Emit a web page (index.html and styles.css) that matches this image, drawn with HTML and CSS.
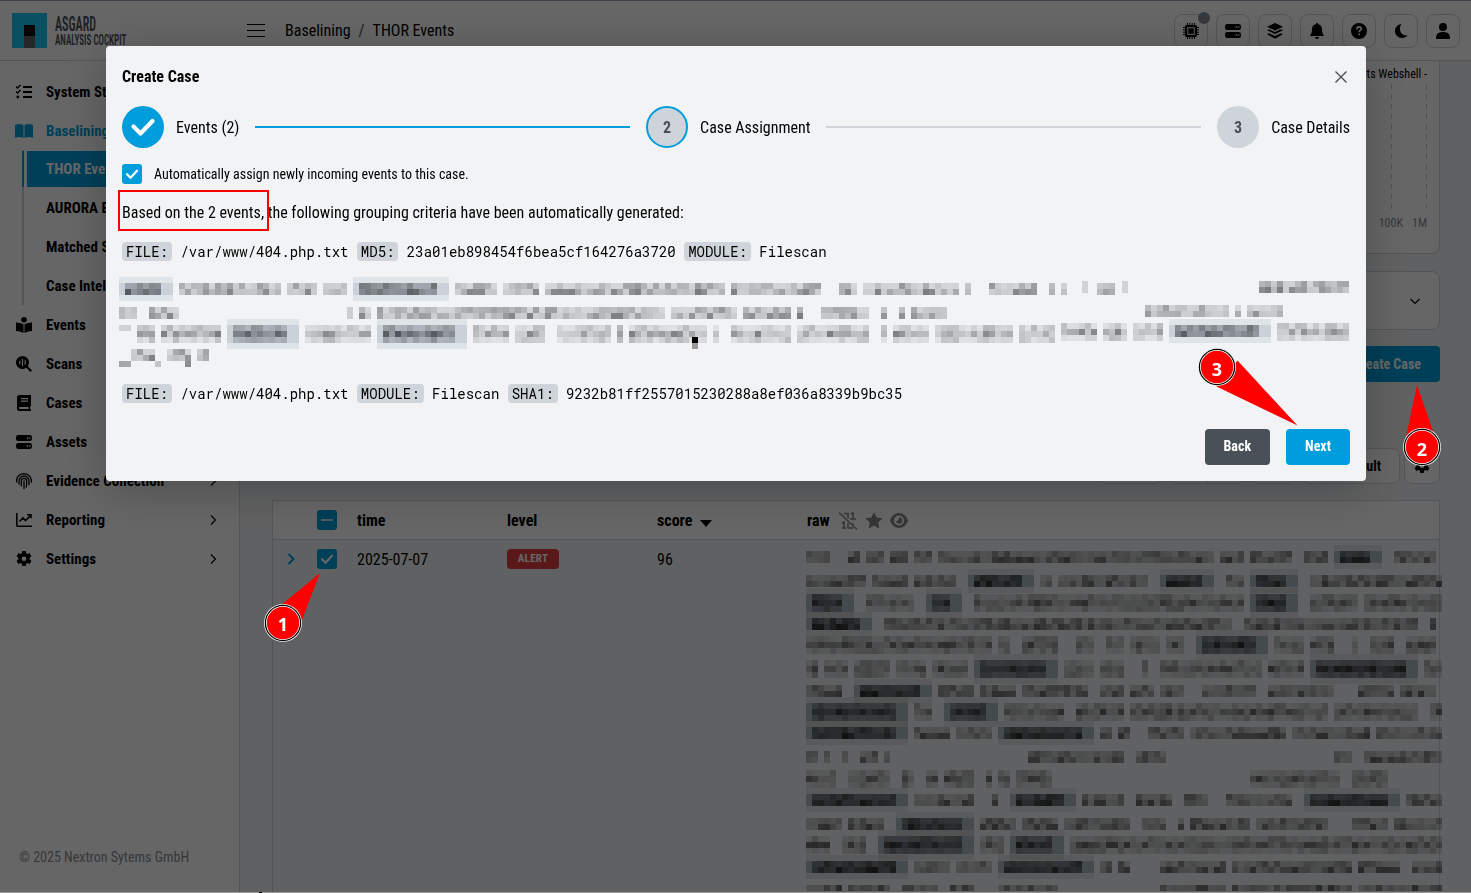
FILE: index.html
```html
<!DOCTYPE html>
<html lang="en">
<head>
<meta charset="utf-8">
<title>ASGARD Analysis Cockpit</title>
<link rel="stylesheet" href="styles.css">
</head>
<body>
<svg class="defs" width="0" height="0">
  <symbol id="server" viewBox="0 0 16 16"><path fill-rule="evenodd" d="M2.2 1h11.6A2.2 2.2 0 0 1 16 3.200v1.600A2.200 2.200 0 0 1 13.800 7H2.200A2.200 2.200 0 0 1 0 4.800V3.200A2.200 2.200 0 0 1 2.200 1zM10.700 3.200v1.600h1.600V3.200zM13.300 3.200v1.600h1.200V3.200zM2.200 9h11.600A2.200 2.200 0 0 1 16 11.200v1.600a2.200 2.200 0 0 1-2.200 2.200H2.200A2.200 2.200 0 0 1 0 12.800v-1.600A2.200 2.200 0 0 1 2.200 9zM10.700 11.200v1.600h1.600v-1.600zM13.300 11.200v1.600h1.200v-1.600z"/></symbol>
  <symbol id="gear" viewBox="0 0 16 16"><path fill-rule="evenodd" d="M6.300 0h3.400l.5 2.300 1.200.7 2.300-.8 1.700 3-1.800 1.600v1.500l1.800 1.600-1.700 3-2.300-.8-1.200.7-.5 2.200H6.300l-.5-2.200-1.200-.7-2.300.8-1.700-3 1.800-1.600V6.800L.6 5.200l1.700-3 2.300.8 1.200-.7zM8 5.400a2.300 2.300 0 1 0 0 4.700 2.300 2.300 0 0 0 0-4.700z"/></symbol>
  <symbol id="check" viewBox="0 0 20 20"><path d="M5 10.200l3.500 3.500 6.500-7" fill="none" stroke="currentColor" stroke-width="2.300" stroke-linecap="round" stroke-linejoin="round"/></symbol>
  <symbol id="chev" viewBox="0 0 16 16"><path d="M6 3.500l4.500 4.500L6 12.500" fill="none" stroke="currentColor" stroke-width="1.200"/></symbol>
</svg>

<header class="topbar">
  <div class="brand">
    <svg class="logo" width="35" height="35" viewBox="0 0 35 35"><path fill="#14c8f5" d="M0 0h35v35H0z"/><path fill="#111" d="M12 12h11v11H12z"/><path fill="#5c6264" d="M12 23h11v12H12z"/></svg>
    <div class="wordmark"><span class="wm1">ASGARD</span><span class="wm2">ANALYSIS COCKPIT</span></div>
  </div>
  <svg class="burger" width="18" height="14" viewBox="0 0 18 14"><path d="M0 .5h18M0 6.500h18M0 12.500h18" stroke="#000"/></svg>
  <nav class="crumbs"><span>Baselining</span><span class="slash">/</span><span>THOR Events</span></nav>
  <div class="tools">
    <span class="tool"><svg viewBox="0 0 16 16"><path fill-rule="evenodd" d="M3 2h10l1 1v10l-1 1H3l-1-1V3zM4.300 4.300v7.400h7.400V4.300zM5.300 5.300h5.400v5.400H5.300z"/><path d="M4.500 0v16M6.800 0v16M9.200 0v16M11.500 0v16M0 4.500h16M0 6.800h16M0 9.200h16M0 11.500h16" stroke="#000" stroke-dasharray="2.300 11.400"/></svg><i class="dot"></i></span>
    <span class="tool"><svg><use href="#server"/></svg></span>
    <span class="tool"><svg viewBox="0 0 16 16"><path d="M8 0l8 3.700-8 3.700-8-3.700zM0 7.200l2-.9 6 2.800 6-2.800 2 .9-8 3.700zM0 11.200l2-.9 6 2.800 6-2.800 2 .9L8 15.800z"/></svg></span>
    <span class="tool"><svg viewBox="0 0 16 16"><path d="M8 0c.7 0 1 .5 1 1.100 2.400.5 4 2.400 4 4.900 0 3.500.8 5.500 2.200 7H.8C2.200 11.500 3 9.500 3 6c0-2.500 1.600-4.400 4-4.900C7 .5 7.300 0 8 0zM6 14h4a2 2 0 0 1-4 0z"/></svg></span>
    <span class="tool"><svg viewBox="0 0 16 16"><circle cx="8" cy="8" r="8"/><path d="M5.800 6.200c0-1.600 1-2.300 2.200-2.300s2.200.8 2.200 2c0 1.500-1.900 1.600-2 3.200M8.100 10.600v1.700" fill="none" stroke="#fff" stroke-width="1.600"/></svg></span>
    <span class="tool"><svg viewBox="0 0 16 16"><path d="M8.500 1C4.800 1.300 2 4.200 2 8c0 4 3.200 7 7 7 2.300 0 4.300-1 5.500-2.700C10.500 13 7 10.300 7 6.300 7 4.200 7.300 2.300 8.500 1z"/></svg></span>
    <span class="tool"><svg viewBox="0 0 16 16"><circle cx="8" cy="4" r="4"/><path d="M1 15c0-4 2.500-6 7-6s7 2 7 6c0 .7-.3 1-1 1H2c-.7 0-1-.3-1-1z"/></svg></span>
  </div>
</header>

<div class="shell">
  <aside class="side">
    <div class="item"><svg viewBox="0 0 16 16"><path d="M7 3h9M7 8h9M7 13h9" stroke="#000" stroke-width="1.900"/><path d="M0 2.500l1.500 1.500L4.500 1M0 7.500L1.500 9l3-3" fill="none" stroke="#000" stroke-width="1.400"/><circle cx="1.800" cy="13" r="1.400"/></svg>System Status</div>
    <div class="item blue"><svg class="wide" viewBox="0 0 18 16"><path d="M0 2c3-1.300 6-1.200 8.500.2V15C6 13.700 3 13.700 0 14.800zM9.500 2.200C12 .8 15 .7 18 2v12.800c-3-1.100-6-1.100-8.500.2z"/></svg>Baselining</div>
    <div class="sub">
      <div class="subitem on">THOR Events</div>
      <div class="subitem">AURORA Events</div>
      <div class="subitem">Matched Signatures</div>
      <div class="subitem">Case Intelligence</div>
    </div>
    <div class="item"><svg viewBox="0 0 16 16"><circle cx="8" cy="2.800" r="2.800"/><path d="M0 5.500c3 .1 5.500.7 7.500 2V16C5.500 14.700 3 14.200 0 14zM16 5.500c-3 .1-5.500.7-7.500 2V16c2-1.300 4.500-1.800 7.500-2z"/></svg>Events</div>
    <div class="item"><svg viewBox="0 0 16 16"><path fill-rule="evenodd" d="M6.500 0a6.500 6.500 0 0 1 5.300 10.200L16 14.500 14.500 16l-4.300-4.200A6.500 6.500 0 1 1 6.500 0zM3.200 4.700v3.600h1.200V4.700zM5.900 3v7h1.200V3zM8.600 4.200v4.600h1.200V4.200z"/></svg>Scans</div>
    <div class="item"><svg viewBox="0 0 16 16"><path fill-rule="evenodd" d="M3.500 0H15v11.500h-1V14h1v2H3.500A2.500 2.500 0 0 1 1 13.500v-11A2.500 2.500 0 0 1 3.500 0zM5 3v1.200h7V3zM5 5.600v1.200h7V5.600zM4 12c-1.500 0-1.500 2 0 2h8.500v-2z"/></svg>Cases</div>
    <div class="item"><svg><use href="#server"/></svg>Assets</div>
    <div class="item"><svg viewBox="0 0 16 16"><path d="M.6 9.500V7.500C.6 3.500 4 .7 8 .7s7.400 3 7.400 7v2M3 11.500V8a5 5 0 0 1 10 0v4M5.300 13.500V8a2.700 2.700 0 0 1 5.400 0c0 2.500 0 4-.5 6.500M8 7.500V16" fill="none" stroke="#000" stroke-width="1.300"/></svg>Evidence Collection<svg class="more"><use href="#chev"/></svg></div>
    <div class="item"><svg viewBox="0 0 16 16"><path d="M.8 1v12.200c0 .6.400 1 1 1H16M3.500 9.500L7 6l2.500 2.500L15 3M11 2.800h4v3.500" fill="none" stroke="#000" stroke-width="1.600"/></svg>Reporting<svg class="more"><use href="#chev"/></svg></div>
    <div class="item"><svg><use href="#gear"/></svg>Settings<svg class="more"><use href="#chev"/></svg></div>
    <div class="copy">© 2025 Nextron Sytems GmbH</div>
  </aside>

  <main class="main">
    <section class="chart">
      <div class="plot">
        <svg class="grid" width="37" height="146" viewBox="0 0 37 146"><path d="M1.500 0v146" stroke="#c4c9ce" stroke-dasharray="5 5"/><path d="M36.500 0v146" stroke="#c4c9ce" stroke-dasharray="5 5"/></svg>
        <div class="legend">Detects Webshell -</div>
      </div>
      <div class="axis"><span>100K</span><span>1M</span></div>
    </section>
    <section class="filter"><svg viewBox="0 0 16 16" class="down"><use href="#chev"/></svg></section>
    <div class="actions"><span class="btn primary">Create Case</span></div>
    <div class="toolbar"><span class="tb w1"></span><span class="tb w2"></span><span class="tb w3"></span><span class="tb w4">Default</span><span class="tb w5"><svg width="16" height="16"><use href="#gear"/></svg></span></div>
    <section class="table">
      <div class="row head">
        <span></span><span class="box"><svg viewBox="0 0 20 20"><path d="M4 10h12" stroke="#fff" stroke-width="1.500"/></svg></span>
        <span>time</span><span>level</span><span>score <i class="caret"></i></span>
        <span class="raw">raw
          <svg width="20" height="18" viewBox="0 0 20 18"><path d="M1 .5l18 17" stroke="#82878c" stroke-width="1.500"/><path d="M6 1.500h4v5M13 2l2-1v6M4 11l2-1v6M4 16h4M10 11v5h5M15 11v2M12 7h6" fill="none" stroke="#82878c" stroke-width="1.500"/></svg>
          <svg width="18" height="17" viewBox="0 0 18 17"><path fill="#82878c" d="M9 0l2.600 5.500 6 .8-4.400 4.100 1.100 6L9 13.500l-5.300 2.900 1.100-6L.4 6.300l6-.8z"/></svg>
          <svg width="18" height="15" viewBox="0 0 18 15"><path fill="#82878c" fill-rule="evenodd" d="M9 0c4 0 7.300 2.800 9 7.500-1.700 4.700-5 7.500-9 7.500S1.700 12.200 0 7.500C1.700 2.800 5 0 9 0zm0 2.500a5 5 0 1 0 0 10 5 5 0 0 0 0-10z"/><path fill="#82878c" d="M9 4.300a3.200 3.200 0 1 1-3.100 3.700c2 .4 3.300-1.200 3.100-3.700z"/></svg>
        </span>
      </div>
      <div class="row">
        <span class="exp"><svg viewBox="0 0 16 16"><path d="M5.500 3l5 5-5 5" fill="none" stroke="#009ddc" stroke-width="2"/></svg></span><span class="box"><svg><use href="#check"/></svg></span>
        <span>2025-07-07</span><span><b class="alert">ALERT</b></span><span>96</span>
        <span class="rawcell"><canvas id="rawMosaic" width="638" height="348"></canvas></span>
      </div>
    </section>
  </main>
</div>

<div class="backdrop"></div>
<div class="edge"><i></i></div>

<div class="modal">
  <div class="mhead"><span>Create Case</span><svg width="12" height="12" viewBox="0 0 12 12"><path d="M.5.5l11 11M11.500.5l-11 11" stroke="#495057" stroke-width="1.400"/></svg></div>
  <div class="steps">
    <span class="circle done"><svg viewBox="0 0 42 42"><path d="M11.500 20.500l7 7L30.500 15" fill="none" stroke="#fff" stroke-width="4.200" stroke-linecap="round" stroke-linejoin="round"/></svg></span><span class="label">Events (2)</span><i class="line active"></i>
    <span class="circle current">2</span><span class="label">Case Assignment</span><i class="line"></i>
    <span class="circle">3</span><span class="label">Case Details</span>
  </div>
  <div class="auto"><span class="box"><svg><use href="#check"/></svg></span>Automatically assign newly incoming events to this case.</div>
  <p class="based">Based on the 2 events, the following grouping criteria have been automatically generated:</p>
  <div class="crit"><code>FILE:</code> /var/www/404.php.txt <code>MD5:</code> 23a01eb898454f6bea5cf164276a3720 <code>MODULE:</code> Filescan</div>
  <canvas class="hidden-crit" id="critMosaic" width="1236" height="92"></canvas>
  <div class="crit"><code>FILE:</code> /var/www/404.php.txt <code>MODULE:</code> Filescan <code>SHA1:</code> 9232b81ff2557015230288a8ef036a8339b9bc35</div>
  <div class="mfoot"><span class="btn dark">Back</span><span class="btn primary">Next</span></div>
</div>

<svg class="marks" width="1471" height="893" viewBox="0 0 1471 893">
  <rect x="119" y="191" width="149" height="39" fill="none" stroke="#f00" stroke-width="2"/>
  <path fill="#f00" d="M320 573L280 606l22 14zM1417 385l-11 52 29 0zM1297.500 425.500l-60-65-21 26z"/>
  <g>
    <g class="pin" transform="translate(283 623)"><circle r="19" class="p0"/><circle r="18.200" class="p1"/><circle r="17" class="p2"/><circle r="16.200" class="p3"/><text y="8">1</text></g>
    <g class="pin" transform="translate(1422 447)"><circle r="19" class="p0"/><circle r="18.200" class="p1"/><circle r="17" class="p2"/><circle r="16.200" class="p3"/><text y="8.500">2</text></g>
    <g class="pin" transform="translate(1217 367)"><circle r="19" class="p0"/><circle r="18.200" class="p1"/><circle r="17" class="p2"/><circle r="16.200" class="p3"/><text y="8.500">3</text></g>
  </g>
</svg>
<script src="mosaic.js"></script>
</body>
</html>
```

FILE: styles.css
```css
*{box-sizing:border-box}
body{margin:0;width:1471px;height:893px;overflow:hidden;background:#f1f3f5;font:16px/24px "Roboto Condensed",Roboto,sans-serif;font-stretch:75%;color:#000;position:relative}
.defs{position:absolute}
svg{display:block;flex:none}
.topbar{height:61px;background:#fff;border-bottom:1px solid #ced4da;display:flex;align-items:center;padding:0 11px 0 12px;border-top:1px solid #9e9eb8}
.brand{width:235px;display:flex;gap:8px;align-items:center}
.wordmark{display:flex;flex-direction:column;color:#495057;font-weight:600;padding-top:1px}
.wm1{font-size:20px;line-height:18px;width:41px;transform:scaleX(.6);transform-origin:0 0;white-space:nowrap}
.wm2{font-size:14px;line-height:15px;transform:scaleX(.645);transform-origin:0 0;white-space:nowrap;width:71px}
.crumbs{margin-left:20px;display:flex;gap:8px}
.slash{color:#495057}
.tools{margin-left:auto;display:flex;gap:8px}
.tool{width:34px;height:34px;border:1px solid #ced4da;border-radius:8px;display:grid;place-items:center;position:relative}
.tool svg{width:16px;height:16px}
.dot{position:absolute;right:-3px;top:-3px;width:12px;height:12px;border-radius:50%;background:#868e96}
.shell{display:flex;height:832px}
.side{width:240px;background:#fff;border-right:1px solid #ced4da;display:flex;flex-direction:column;padding-top:11px}
.item{height:39px;display:flex;align-items:center;padding:0 18px 0 16px;font-weight:700;font-size:15px}
.item svg{width:16px;height:16px;margin-right:14px}
.item svg.wide{width:18px;margin:0 13px 0 -1px}
.item svg.more{margin:0 0 0 auto}
.blue{color:#009ddc;fill:#009ddc}
.sub{margin:0 0 0 22px;height:155px;border-left:2px solid #ced4da;font-weight:700;font-size:15px;padding-top:1px}
.subitem{height:39px;padding-left:19px;margin-left:3px;line-height:38px;white-space:nowrap}
.subitem.on{height:36px;line-height:36px;background:#009ddc;color:#fff;margin-bottom:2px;box-shadow:-3px 0 #fff,-5px 0 #009ddc}
.copy{margin:auto 0 24px 19px;font-size:14px;color:#868e96}
.main{flex:1;padding:0 31px 0 32px;overflow:hidden}
.chart{height:193px;background:#fff;border:1px solid #ced4da;border-top:0;border-radius:0 0 8px 8px;padding:3px 12px 0;display:flex;flex-direction:column;align-items:flex-end}
.plot{display:grid;justify-items:end}
.plot>*{grid-area:1/1}
.legend{font-size:12px;line-height:20px;height:20px;background:#fff}
.axis{display:flex;gap:9px;font-size:12px;line-height:27px;color:#868e96}
.filter{height:59px;margin-top:17px;background:#fff;border:1px solid #ced4da;border-radius:8px;display:flex;align-items:center;justify-content:flex-end;padding-right:16px}
.down{width:16px;height:16px;transform:rotate(90deg)}
.actions{margin-top:16px;display:flex;justify-content:flex-end}
.btn{height:36px;border-radius:4px;color:#fff;font-size:14px;font-weight:700;line-height:35px;padding:0 19px}
.actions .btn{line-height:36px}
.primary{background:#009ddc}
.dark{background:#495057}
.toolbar{margin-top:66px;height:36px;display:flex;justify-content:flex-end}
.tb{border:1px solid #ced4da;border-radius:8px;background:#fff;font-size:14px;font-weight:700;line-height:34px;height:36px}
.w1{width:63px;margin-right:7px}
.w2{width:75px;margin-right:7px;background:linear-gradient(90deg,#fff 37px,#ced4da 37px,#ced4da 38px,#fff 38px)}
.w3{width:45px;margin-right:7px}
.w4{width:97px;margin-right:4px;text-align:right;padding-right:18px}
.w5{width:36px;display:grid;place-items:center}
.table{margin-top:16px;border:1px solid #ced4da;height:400px}
.row{display:grid;grid-template-columns:44px 40px 150px 150px 150px 1fr;line-height:39px}
.head{height:39px;background:#fff;border-bottom:1px solid #ced4da;font-weight:700}
.box{display:block;width:20px;height:20px;border-radius:3px;background:#009ddc;color:#fff;align-self:start}
.row .box{margin-top:9px}
.box svg{width:20px;height:20px}
.exp svg{width:16px;height:16px;margin:11px 0 0 10px}
.caret{display:inline-block;border:6px solid transparent;border-top:7px solid #000;border-bottom:0;margin-left:4px;vertical-align:-1px}
.raw{display:flex;align-items:center;gap:9px}
.raw svg{margin:0 -1px}
.alert{display:block;width:52px;height:20px;margin-top:9px;border-radius:4px;background:#e03e3e;color:#fff;font-size:11px;line-height:20px;text-align:center;letter-spacing:.3px}
.rawcell canvas{display:block;margin:4px 0 0 -1px}
.backdrop{position:absolute;inset:0;background:rgba(0,0,0,.6)}
.edge{position:absolute;left:0;right:0;bottom:0;height:1px;background:#999}
.edge i{position:absolute;left:259px;width:3px;height:1px;background:#000}
.modal{position:absolute;left:106px;top:46px;width:1260px;height:435px;background:#f1f3f5;border-radius:4px;box-shadow:0 8px 48px rgba(0,0,0,.25);padding:16px;display:flex;flex-direction:column}
.mhead{height:28px;display:flex;justify-content:space-between;align-items:center;font-weight:700;padding:1px 3px 0 0}
.steps{margin-top:16px;display:flex;align-items:center;height:42px}
.circle{width:42px;height:42px;border-radius:50%;background:#ced4da;color:#495057;font-weight:700;display:grid;place-items:center;flex:none;line-height:22px;padding-top:1px}
.done{background:#009ddc;padding:0}
.done svg{width:42px;height:42px}
.current{border:2px solid #009ddc}
.label{margin:0 16px 0 12px;white-space:nowrap;padding-top:2px}
.label:last-child{margin-right:0}
.line{flex:1;height:2px;background:#ced4da;margin-right:16px}
.line.active{background:#009ddc}
.auto{margin-top:16px;height:20px;display:flex;gap:12px;font-size:14px;line-height:20px}
.based{margin:17px 0 0;height:23px}
.crit{margin-top:15px;height:25px;line-height:25px;font-family:"Roboto Mono","Liberation Mono",monospace;font-size:14px;white-space:nowrap}
.crit code{font:inherit;background:#ced4da;border-radius:4px;padding:0 4px}
.hidden-crit{margin:13px 0 0 -3px;width:1236px;height:92px;flex:none}
.hidden-crit + .crit{margin-top:12px}
.mfoot{margin-top:auto;display:flex;gap:16px;justify-content:flex-end}
.marks{position:absolute;left:0;top:0}
.pin text{font:700 18px "Noto Sans",sans-serif;fill:#fff;text-anchor:middle}
.p0{fill:#eee}
.p1{fill:#000}
.p2{fill:#fff}
.p3{fill:#f00}
```

FILE: mosaic.js
```js
// Pixelated redaction blocks. Each line: [y, height, "start-end ..."] with "t" marking a tag.
let seed = 7;
const rnd = () => (seed = (seed * 16807) % 2147483647) / 2147483647;

function drawLine(ctx, y, h, spec, look) {
  const rows = Math.round(h / 6);
  for (const part of spec.split(' ')) {
    const tag = part[0] === 't';
    const [a, b] = part.replace('t', '').split('-').map(Number);
    if (tag) {
      ctx.fillStyle = look.halo;
      ctx.fillRect(a * 6, y - 6, (b - a) * 6, h + 12);
      ctx.fillStyle = look.tag;
      ctx.fillRect(a * 6, y, (b - a) * 6, h);
    }
    for (let c = a; c < b; c++) {
      if (tag && (c < a + 1 || c > b - 3)) continue;
      for (let r = 0; r < rows; r++) {
        const faint = rows === 3 && r !== 1 ? 0.5 : (rows === 2 && r === 0 ? 0.75 : 1);
        const n = rnd();
        const v = (look.base + n * n * look.range + (tag ? look.tagInk : 0)) * faint;
        ctx.fillStyle = `rgba(${look.ink},${v.toFixed(2)})`;
        ctx.fillRect(c * 6, y + r * 6, 6, 6);
      }
    }
  }
}

const light = { halo: 'rgba(170,182,195,.25)', tag: 'rgba(150,162,178,.3)', ink: '40,42,45', base: 0.18, range: 0.42, tagInk: 0.16 };
const dark = { halo: 'rgba(80,95,100,.12)', tag: 'rgba(70,100,115,.32)', ink: '15,15,12', base: 0.2, range: 0.42, tagInk: 0.22 };

const crit = document.getElementById('critMosaic').getContext('2d');
[
  [6, 12, 't0-9 10-27 28-33 34-38 t39-55 56-63 64-70 71-101 102-117 120-123 124-140 141-142 145-153 155-156 157-158 163-166'],
  [4, 12, '190-205'],
  [30, 12, '0-3 5-10 38-39 40-42 43-91 92-103 104-112 113-114 117-125 127-128 130-131 132-138'],
  [28, 12, '171-185 186-187 188-194'],
  [48, 18, '3-6 7-17 t18-30 31-42 t43-58 59-65 66-71 73-82 83-84 85-98 99-100 102-112 113-125 127-128 129-135 136-149 150-156'],
  [46, 18, '157-163 164-168 169-174 193-205'],
  [48, 12, 't175-192'],
  [72, 12, '2-6 8-12 13-15'],
  [84, 6, '0-2 6-7 11-12']
].forEach(([y, h, s]) => drawLine(crit, y, h, s, light));
crit.fillStyle = '#000';
crit.fillRect(573, 60, 6, 6);
crit.fillStyle = '#999';
crit.fillRect(573, 66, 6, 6);
crit.fillStyle = 'rgba(30,30,30,.15)';
crit.fillRect(0, 48, 12, 6);
crit.fillRect(963, 4, 6, 12);
crit.fillRect(1003, 4, 6, 12);

const raw = document.getElementById('rawMosaic').getContext('2d');
[
  [8, 12, '0-4 7-9 10-13 14-17 18-21 22-68 69-73 74-81 83-87 t88-96 98-105'],
  [32, 12, '0-10 11-17 18-25 t27-38 39-41 42-57 t59-68 70-73 t74-82 84-106'],
  [51, 18, 't0-8 10-18 t20-26 28-73 t74-82 84-92 93-106'],
  [75, 12, 't0-11 13-71 73-102 104-105'],
  [93, 18, '0-31 32-34 36-42 45-48 50-53 54-59 60-63 t65-77 78-83 84-88 91-92 94-98 100-105'],
  [117, 18, '0-2 3-7 8-14 15-20 21-27 t28-42 43-48 49-53 56-57 59-76 77-83 t84-102 103-106'],
  [142, 12, '0-6 t8-21 22-28 29-35 36-47 49-53 54-58 59-63 66-75 77-88 92-98 99-105'],
  [160, 18, 't0-17 18-21 t23-32 33-43 45-53 54-87 88-102 104-106'],
  [184, 12, 't0-17 18-24 25-31 t32-48 49-51 52-54 57-63 64-80 81-94 95-106'],
  [208, 12, '0-2 3-4 6-7 9-12 13-14 37-53 55-60 88-91 93-106'],
  [227, 18, '0-5 7-14 16-18 20-22 23-28 30-31 32-34 35-41 74-89 91-97'],
  [251, 12, 't0-17 18-28 31-32 t34-45 46-53 55-61 63-67 70-81 t83-99 100-106'],
  [275, 12, '0-6 7-13 t15-28 29-35 36-42 43-54 56-60 62-63 64-74 75-87 91-97 98-106'],
  [293, 18, '0-4 6-10 t12-28 29-33 t34-43 44-106'],
  [318, 12, 't0-17 18-24 25-31 t32-48 49-51 52-54 59-70 71-91 92-99 101-106'],
  [342, 6, '0-6 7-14 16-22 24-28 32-42 59-70 71-91 92-106']
].forEach(([y, h, s]) => drawLine(raw, y - 1, h, s, dark));
```
